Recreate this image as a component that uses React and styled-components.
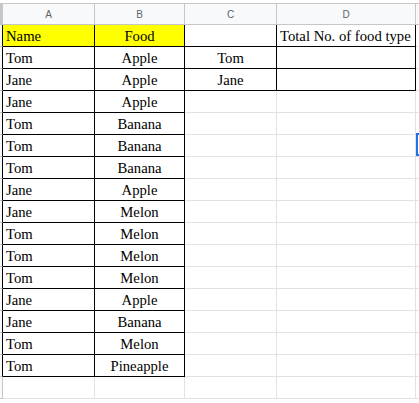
import React from 'react';
import styled, { createGlobalStyle, css } from 'styled-components';

const GlobalStyle = createGlobalStyle`
  html, body {
    margin: 0;
    padding: 0;
    background: #fff;
  }
`;

const COLUMNS = ['A', 'B', 'C', 'D', 'E'];
const WIDTHS = [92, 90, 92, 139, 8];

const rows = [
  ['Name', 'Food', '', 'Total No. of food type'],
  ['Tom', 'Apple', 'Tom', ''],
  ['Jane', 'Apple', 'Jane', ''],
  ['Jane', 'Apple'],
  ['Tom', 'Banana'],
  ['Tom', 'Banana'],
  ['Tom', 'Banana'],
  ['Jane', 'Apple'],
  ['Jane', 'Melon'],
  ['Tom', 'Melon'],
  ['Tom', 'Melon'],
  ['Tom', 'Melon'],
  ['Jane', 'Apple'],
  ['Jane', 'Banana'],
  ['Tom', 'Melon'],
  ['Tom', 'Pineapple'],
  [],
];

const ALIGN = ['left', 'center', 'center', 'left'];

// which cells carry the black "all borders" formatting
const bordered = (r, c) => {
  if (r < 0 || r >= 16) return false;
  if (c === 0 || c === 1) return true;
  if (c === 3 && r <= 2) return true;
  if (c === 2 && (r === 1 || r === 2)) return true;
  return false;
};

const GRID = '#e2e2e2';
const HEAD_LINE = '#c4c7c5';

const Sheet = styled.div`
  display: grid;
  grid-template-columns: 3px ${WIDTHS.map((w) => `${w}px`).join(' ')};
  grid-auto-rows: 22px;
  grid-template-rows: 25px;
  width: 419px;
  overflow: hidden;
  font-family: 'Liberation Serif', 'Times New Roman', serif;
  font-size: 14.7px;
  color: #000;
`;

const Corner = styled.div`
  background: #c4c7c5;
  border-top: 3px solid #fff;
  box-sizing: border-box;
`;

const ColHead = styled.div`
  box-sizing: border-box;
  background: #f8f9fa;
  border-top: 1px solid ${HEAD_LINE};
  margin-top: 3px;
  border-right: 1px solid ${HEAD_LINE};
  border-bottom: 1px solid ${HEAD_LINE};
  display: flex;
  align-items: center;
  justify-content: center;
  font-family: 'Liberation Sans', Arial, sans-serif;
  font-size: 10px;
  color: #5f6368;
  padding-top: 1px;
`;

const RowHead = styled.div`
  box-sizing: border-box;
  background: #f8f9fa;
  border-right: 1px solid ${(p) => (p.$black ? '#000' : HEAD_LINE)};
  border-bottom: 1px solid ${HEAD_LINE};
`;

const Cell = styled.div`
  box-sizing: border-box;
  position: relative;
  display: flex;
  align-items: flex-end;
  justify-content: ${(p) => (p.$align === 'center' ? 'center' : 'flex-start')};
  padding: 0 3px 1px;
  white-space: nowrap;
  line-height: 18px;
  background: ${(p) => (p.$fill ? '#ffff00' : '#fff')};
  border-right: 1px solid ${(p) => (p.$right ? '#000' : GRID)};
  border-bottom: 1px solid ${(p) => (p.$bottom ? '#000' : GRID)};
  ${(p) =>
    p.$selected &&
    css`
      &::after {
        content: '';
        position: absolute;
        left: 0;
        top: -2px;
        width: 8px;
        height: 23px;
        border: 2px solid #1a73e8;
        box-sizing: border-box;
      }
    `}
`;

export default function App() {
  return (
    <>
      <GlobalStyle />
      <Sheet>
        <Corner />
        {COLUMNS.map((c) => (
          <ColHead key={c}>{c === 'E' ? '' : c}</ColHead>
        ))}
        {rows.map((row, r) => (
          <React.Fragment key={r}>
            <RowHead $black={bordered(r, 0)} />
            {COLUMNS.map((_, c) => {
              if (c === 4) {
                return <Cell key={c} $selected={r === 5} />;
              }
              return (
                <Cell
                  key={c}
                  $align={r === 0 && c === 0 ? 'left' : ALIGN[c]}
                  $fill={r === 0 && c < 2}
                  $right={bordered(r, c) || bordered(r, c + 1)}
                  $bottom={bordered(r, c) || bordered(r + 1, c)}
                >
                  {row[c] || ''}
                </Cell>
              );
            })}
          </React.Fragment>
        ))}
      </Sheet>
    </>
  );
}
